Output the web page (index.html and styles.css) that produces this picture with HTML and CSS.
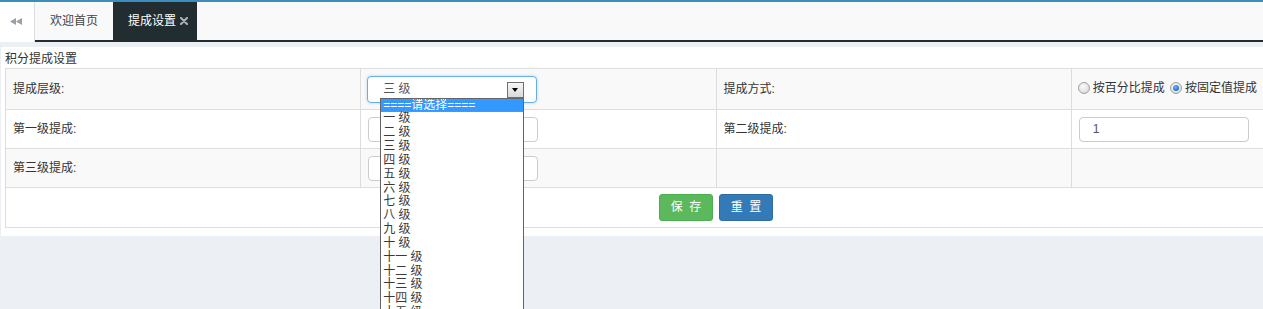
FILE: index.html
```html
<!DOCTYPE html>
<html lang="zh-CN">
<head>
<meta charset="utf-8">
<title>提成设置</title>
<link rel="stylesheet" href="styles.css">
</head>
<body>
<div class="tabbar">
  <div class="tab-prev">
    <svg width="12" height="7" viewBox="0 0 12 7"><path d="M6 0 L0 3.5 L6 7 Z M12 0 L6 3.5 L12 7 Z" fill="#97a1ab"/></svg>
  </div>
  <div class="tabs">
    <div class="tab">欢迎首页</div>
    <div class="tab active">提成设置<svg class="close" width="8" height="8" viewBox="0 0 8 8"><path d="M1 1 L7 7 M7 1 L1 7" stroke="#a9aeb2" stroke-width="2.2" stroke-linecap="round"/></svg></div>
  </div>
</div>
<div class="content">
  <div class="title">积分提成设置</div>
  <table class="grid">
    <tr class="row-a">
      <td class="label">提成层级:</td>
      <td>
        <div class="select-wrap">
          <div class="select"><span class="select-text">三 级</span><span class="arrow"></span></div>
          <ul class="dropdown">
            <li class="hl">====请选择====</li>
            <li>一 级</li><li>二 级</li><li>三 级</li><li>四 级</li><li>五 级</li>
            <li>六 级</li><li>七 级</li><li>八 级</li><li>九 级</li><li>十 级</li>
            <li>十一 级</li><li>十二 级</li><li>十三 级</li><li>十四 级</li><li>十五 级</li>
            <li>十六 级</li>
          </ul>
        </div>
      </td>
      <td class="label">提成方式:</td>
      <td class="radios">
        <label class="radio"><span class="rb"></span>按百分比提成</label>
        <label class="radio"><span class="rb checked"></span>按固定值提成</label>
      </td>
    </tr>
    <tr class="row-b">
      <td class="label">第一级提成:</td>
      <td><div class="input"></div></td>
      <td class="label">第二级提成:</td>
      <td><div class="input">1</div></td>
    </tr>
    <tr class="row-a">
      <td class="label">第三级提成:</td>
      <td><div class="input"></div></td>
      <td></td>
      <td></td>
    </tr>
    <tr class="row-btn">
      <td colspan="4" class="actions">
        <span class="btn btn-save">保 存</span><span class="btn btn-reset">重 置</span>
      </td>
    </tr>
  </table>
</div>
</body>
</html>
```

FILE: styles.css
```css
html, body {
  margin: 0;
  padding: 0;
  overflow: hidden;
  height: 100%;
}
body {
  background: #ecf0f5;
  font-family: "Liberation Sans", "Noto Sans CJK SC", sans-serif;
  font-size: 12px;
  color: #333;
}
.tabbar {
  display: flex;
  height: 40px;
  border-top: 2px solid #3c8dbc;
  background: #f9f9f9;
}
.tab-prev {
  width: 35px;
  height: 40px;
  background: #fff;
  border-right: 1px solid #ddd;
  display: flex;
  align-items: center;
  justify-content: center;
  box-sizing: border-box;
  padding-right: 3px;
  padding-bottom: 2px;
}
.tabs {
  flex: 1;
  display: flex;
  border-bottom: 2px solid #222d32;
  height: 38px;
}
.tab {
  display: flex;
  align-items: center;
  height: 38px;
  padding: 0 15px;
  color: #444;
  line-height: 14px;
}
.tab.active {
  background: #222d32;
  color: #fff;
  padding-right: 9px;
}
.close {
  margin-left: 4px;
}
.content {
  margin: 5px 0 0 1px;
  background: #fff;
  padding: 4px 0 8px 4px;
}
.title {
  height: 17px;
  line-height: 17px;
  color: #333;
}
.grid {
  border-collapse: collapse;
  width: 1422px;
  table-layout: fixed;
}
.grid td {
  border: 1px solid #ddd;
  padding: 0 7px;
  vertical-align: middle;
  line-height: 14px;
}
.row-a td { background: #f9f9f9; }
.row-b td { background: #fff; }
.row-a td, .row-b td { height: 38px; }
.grid tr:first-child td { height: 40px; }
.row-btn td { height: 39px; background: #fff; }
.label { color: #333; }
.select-wrap {
  position: relative;
  width: 170px;
}
.select {
  box-sizing: border-box;
  width: 170px;
  height: 27px;
  border: 1px solid #66afe9;
  border-radius: 4px;
  background: #fff;
  box-shadow: 0 0 3px rgba(102,175,233,0.5);
  display: flex;
  align-items: center;
  padding-left: 15px;
  position: relative;
  margin-left: -1px;
}
.select-text { color: #555; }
.arrow {
  position: absolute;
  left: 139px;
  top: 5px;
  width: 17px;
  height: 16px;
  box-sizing: border-box;
  border: 1px solid #707070;
  background: linear-gradient(#f6f6f6, #d9d9d9);
}
.arrow::after {
  content: "";
  position: absolute;
  left: 4px;
  top: 5px;
  border-left: 3.5px solid transparent;
  border-right: 3.5px solid transparent;
  border-top: 4px solid #000;
}
.dropdown {
  position: absolute;
  left: 12px;
  top: 22px;
  width: 144px;
  height: 220px;
  overflow: hidden;
  box-sizing: border-box;
  margin: 0;
  padding: 0;
  list-style: none;
  background: #fff;
  border: 1px solid #646464;
  z-index: 10;
}
.dropdown li {
  height: 13.85px;
  line-height: 13.85px;
  padding-left: 2px;
  color: #3a3a3a;
  white-space: nowrap;
  font-size: 12px;
}
.dropdown li.hl {
  background: #3399ff;
  color: #fff;
  outline: 1px dotted #e07a1a;
  outline-offset: -1px;
}
.input {
  box-sizing: border-box;
  width: 170px;
  height: 25px;
  border: 1px solid #ccc;
  border-radius: 4px;
  background: #fff;
  padding-left: 13px;
  line-height: 23px;
  color: #555;
  font-size: 12px;
}
.radios { padding-left: 6px !important; white-space: nowrap; }
.radio {
  display: inline-flex;
  align-items: center;
  color: #333;
}
.radio + .radio { margin-left: 2px; }
.rb {
  display: inline-block;
  box-sizing: border-box;
  width: 12px;
  height: 12px;
  border-radius: 50%;
  border: 1px solid #a0a0a0;
  background: radial-gradient(circle at 40% 35%, #fafafa, #d4d4d4);
  margin-right: 3px;
  position: relative;
}
.rb.checked::after {
  content: "";
  position: absolute;
  left: 2px;
  top: 2px;
  width: 6px;
  height: 6px;
  border-radius: 50%;
  background: radial-gradient(circle at 40% 35%, #6fb6ff, #0b4f9c);
}
.actions {
  text-align: center;
  font-size: 0;
}
.btn {
  display: inline-block;
  box-sizing: border-box;
  width: 54px;
  height: 27px;
  line-height: 25px;
  border-radius: 3px;
  color: #fff;
  font-size: 12px;
  text-align: center;
  vertical-align: middle;
  word-spacing: 3px;
}
.btn-save {
  background: #5cb85c;
  border: 1px solid #4cae4c;
}
.btn-reset {
  background: #337ab7;
  border: 1px solid #2e6da4;
  margin-left: 6px;
}
```
